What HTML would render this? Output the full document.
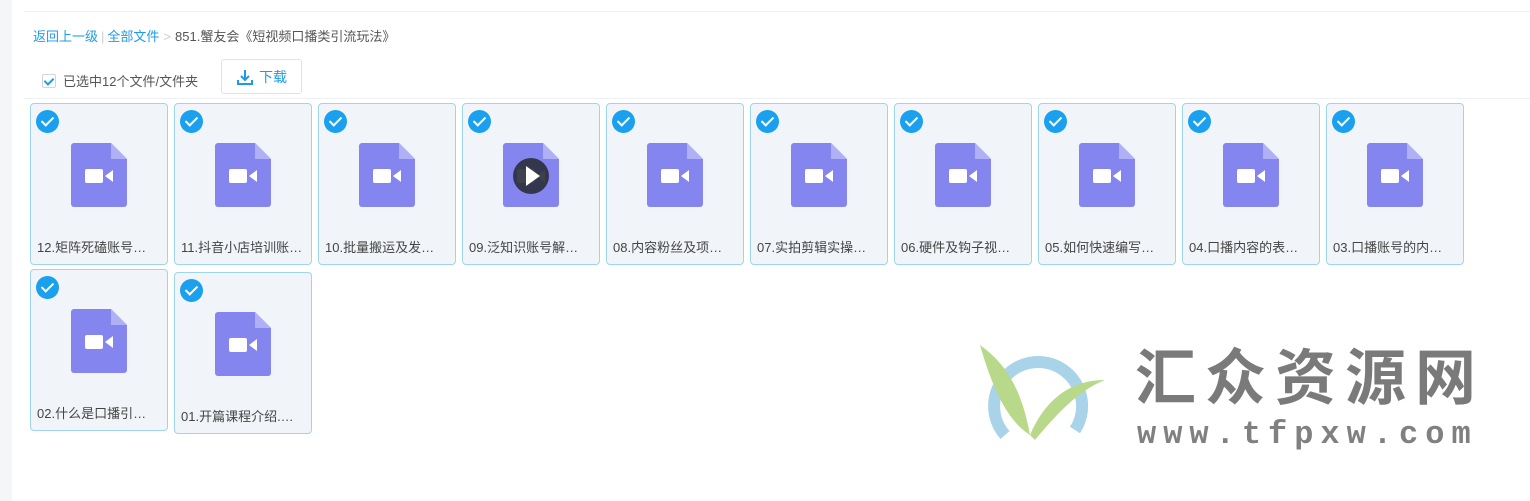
<!DOCTYPE html>
<html><head><meta charset="utf-8"><style>
*{margin:0;padding:0;box-sizing:border-box}
body{width:1530px;height:501px;background:#fff;position:relative;overflow:hidden;font-family:"Liberation Sans","Noto Sans CJK SC",sans-serif}
.strip{position:absolute;left:0;top:0;width:12px;height:501px;background:#f5f6f8}
.topline{position:absolute;left:24px;top:11px;right:0;height:1px;background:#eef0f3}
.crumb{position:absolute;left:33px;top:26px;font-size:13px;color:#555}
.crumb a{color:#1e9be8;text-decoration:none}
.crumb .s{color:#ccc;margin:0 4px}
.sel{position:absolute;left:42px;top:71px;font-size:13px;color:#555;display:flex;align-items:center}
.cb{width:14px;height:14px;border:1px solid #cfd6de;border-radius:2px;margin-right:7px;position:relative;background:#fff}
.cb:after{content:"";position:absolute;left:3px;top:1px;width:4px;height:7px;border:solid #1e9be8;border-width:0 2px 2px 0;transform:rotate(45deg)}
.dl{position:absolute;left:221px;top:59px;width:81px;height:35px;border:1px solid #dde3ea;border-radius:3px;color:#1e9be8;font-size:14px;display:flex;align-items:center;justify-content:center;gap:5px}
.hline{position:absolute;left:24px;top:98px;right:0;height:1px;background:#eef0f3}
.card{position:absolute;width:138px;height:162px;border:1px solid #9fd5ea;border-radius:4px;background:#f1f4f8}
.chk{position:absolute;left:5px;top:6px;width:23px;height:23px;border-radius:50%;background:#1aa0ee}
.chk:after{content:"";position:absolute;left:8px;top:4px;width:5px;height:10px;border:solid #fff;border-width:0 2.5px 2.5px 0;transform:rotate(45deg)}
.fi{position:absolute;left:40px;top:39px}
.nm{position:absolute;left:6px;top:133px;font-size:13px;color:#444;white-space:nowrap}
</style></head><body>
<div class="strip"></div><div class="topline"></div>
<div class="crumb"><a>返回上一级</a><span class="s" style="margin:0 3px">|</span><a>全部文件</a><span class="s">&gt;</span>851.蟹友会《短视频口播类引流玩法》</div>
<div class="sel"><span class="cb"></span>已选中12个文件/文件夹</div>
<div class="dl"><svg width="18" height="18" viewBox="0 0 18 18"><path d="M9 2v10M5 8l4 4 4-4M2 12v4h14v-4" fill="none" stroke="#1e9be8" stroke-width="2"/></svg>下载</div>
<div class="hline"></div>
<div id="cards"></div>
<svg style="position:absolute;left:975px;top:340px" width="140" height="120" viewBox="0 0 140 120">
<path d="M30 95 A44 44 0 1 1 100 90" fill="none" stroke="#a9d3e8" stroke-width="12"/>
<path d="M5 5 C25 20 45 40 55 95 C30 80 15 40 5 5Z" fill="#b9d98a"/>
<path d="M55 95 C70 60 95 40 130 40 C105 50 85 70 60 100Z" fill="#b9d98a"/>
</svg>
<div style="position:absolute;left:1135px;top:343px;font-size:61px;font-weight:bold;color:#7a7a7a;letter-spacing:9px;line-height:70px">汇众资源网</div>
<div style="position:absolute;left:1137px;top:415px;font-size:32px;font-weight:bold;color:#808080;letter-spacing:7px;font-family:'Liberation Mono',monospace;line-height:40px">www.tfpxw.com</div>
<script>
var n=["12.矩阵死磕账号…","11.抖音小店培训账…","10.批量搬运及发…","09.泛知识账号解…","08.内容粉丝及项…","07.实拍剪辑实操…","06.硬件及钩子视…","05.如何快速编写…","04.口播内容的表…","03.口播账号的内…","02.什么是口播引…","01.开篇课程介绍.…"];
var h="";
function icon(play){return '<svg class="fi" width="56" height="64" viewBox="0 0 56 64"><path d="M3 0H40L56 16V61a3 3 0 0 1-3 3H3a3 3 0 0 1-3-3V3a3 3 0 0 1 3-3Z" fill="#8585f0"/><path d="M40 0L56 16H40Z" fill="#b0b0f7"/><rect x="14" y="26" width="18" height="14" rx="2" fill="#fff"/><path d="M34 33l8-6v12z" fill="#fff"/>'+(play?'<circle cx="28" cy="33" r="18" fill="#2a2d3a" opacity=".9"/><path d="M23 23l14 10-14 10z" fill="#fff"/>':'')+'</svg>';}
for(var i=0;i<12;i++){var x,y;if(i<10){x=30+i*144;y=103}else if(i==10){x=30;y=269}else{x=174;y=272}
h+='<div class="card" style="left:'+x+'px;top:'+y+'px"><div class="chk"></div>'+icon(i==3)+'<div class="nm">'+n[i]+'</div></div>';}
document.getElementById("cards").innerHTML=h;
</script>
</body></html>
